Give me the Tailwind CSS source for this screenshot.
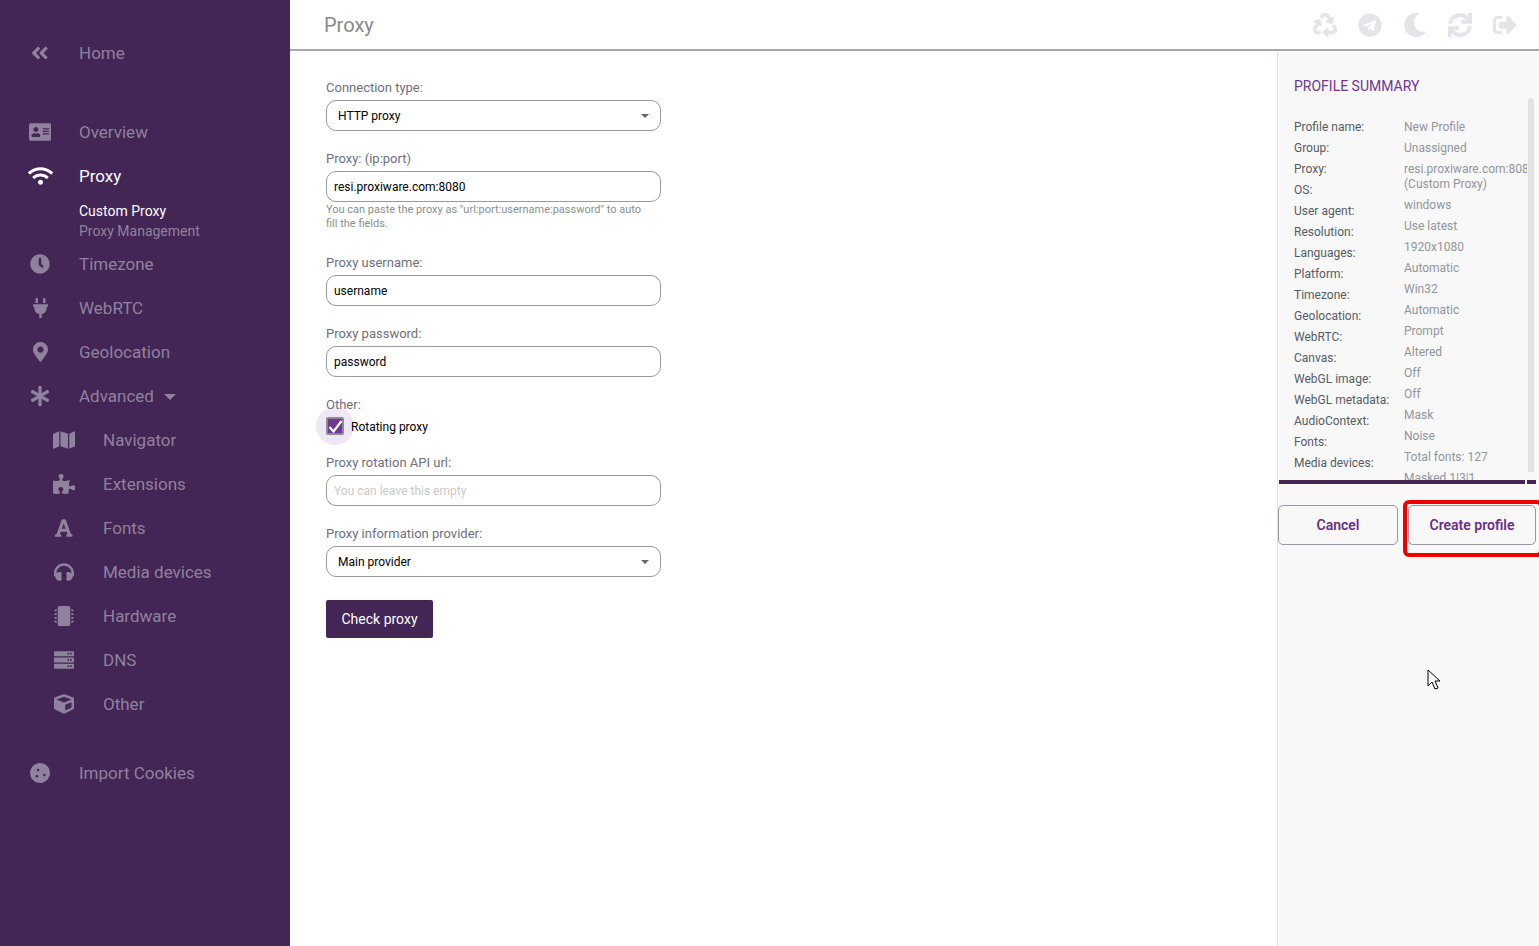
<!DOCTYPE html>
<html lang="en">
<head>
    <meta charset="UTF-8">
    <title>Proxy</title>
    <script src="https://cdn.jsdelivr.net/npm/@tailwindcss/browser@4"></script>
</head>
<body class="bg-white font-['Roboto',sans-serif] overflow-hidden">
<div class="flex h-[946px] w-[1539px] relative overflow-hidden">

    <!-- Sidebar -->
    <aside class="w-[290px] shrink-0 bg-[#432556] text-[#8f829d] text-[17px] pt-[31px]">
        <div class="flex items-center h-[44px] pl-[25px] gap-[24px]">
            <span class="w-[30px] flex justify-center"><svg class="h-[20px] fill-current" viewBox="0 0 448 512"><path d="M223.7 239l136-136c9.4-9.4 24.6-9.4 33.9 0l22.6 22.6c9.4 9.4 9.4 24.6 0 33.9L319.9 256l96.4 96.4c9.4 9.4 9.4 24.6 0 33.9L393.7 409c-9.4 9.4-24.6 9.4-33.9 0l-136-136c-9.5-9.4-9.5-24.6-.1-34zm-192 34l136 136c9.4 9.4 24.6 9.4 33.9 0l22.6-22.6c9.4-9.4 9.4-24.6 0-33.9L127.9 256l96.4-96.4c9.4-9.4 9.4-24.6 0-33.9L201.7 103c-9.4-9.4-24.6-9.4-33.9 0l-136 136c-9.5 9.4-9.5 24.6-.1 34z"/></svg></span>
            <span class="pt-[2px]">Home</span>
        </div>

        <div class="flex items-center h-[44px] pl-[25px] gap-[24px] mt-[35px]">
            <span class="w-[30px] flex justify-center"><svg class="h-[20px] fill-current" viewBox="0 0 576 512"><path d="M528 32H48C21.5 32 0 53.5 0 80v352c0 26.5 21.5 48 48 48h480c26.5 0 48-21.5 48-48V80c0-26.5-21.5-48-48-48zm-352 96c35.3 0 64 28.7 64 64s-28.7 64-64 64-64-28.7-64-64 28.7-64 64-64zm112 236.8c0 10.6-10 19.2-22.4 19.2H86.4C74 384 64 375.4 64 364.8v-19.2c0-31.8 30.1-57.6 67.2-57.6h5c12.3 5.1 25.7 8 39.8 8s27.6-2.9 39.8-8h5c37.1 0 67.2 25.8 67.2 57.6v19.2zM512 312c0 4.4-3.6 8-8 8H360c-4.4 0-8-3.6-8-8v-16c0-4.4 3.6-8 8-8h144c4.4 0 8 3.6 8 8v16zm0-64c0 4.4-3.6 8-8 8H360c-4.4 0-8-3.6-8-8v-16c0-4.4 3.6-8 8-8h144c4.4 0 8 3.6 8 8v16zm0-64c0 4.4-3.6 8-8 8H360c-4.4 0-8-3.6-8-8v-16c0-4.4 3.6-8 8-8h144c4.4 0 8 3.6 8 8v16z"/></svg></span>
            <span class="pt-[2px]">Overview</span>
        </div>
        <div class="flex items-center h-[44px] pl-[25px] gap-[24px] text-white">
            <span class="w-[30px] flex justify-center"><svg class="h-[20px] fill-current" viewBox="0 0 640 512"><path d="M634.91 154.88C457.74-8.99 182.19-8.93 5.09 154.88c-6.66 6.16-6.79 16.59-.35 22.98l34.24 33.97c6.14 6.1 16.02 6.23 22.4.38 145.92-133.68 371.3-133.71 517.25 0 6.38 5.85 16.26 5.71 22.4-.38l34.24-33.97c6.43-6.39 6.3-16.82-.36-22.98zM320 352c-35.35 0-64 28.65-64 64s28.65 64 64 64 64-28.65 64-64-28.65-64-64-64zm202.67-83.59c-115.26-101.93-290.21-101.82-405.34 0-6.9 6.1-7.12 16.69-.57 23.15l34.44 33.99c6 5.92 15.66 6.32 22.05.8 83.95-72.57 209.74-72.41 293.49 0 6.39 5.52 16.05 5.13 22.05-.8l34.44-33.99c6.56-6.46 6.33-17.06-.56-23.15z"/></svg></span>
            <span class="pt-[2px]">Proxy</span>
        </div>
        <div class="pl-[79px] pt-[3px] pb-[1px] text-[14px] leading-[20px]">
            <div class="text-white">Custom Proxy</div>
            <div>Proxy Management</div>
        </div>
        <div class="flex items-center h-[44px] pl-[25px] gap-[24px]">
            <span class="w-[30px] flex justify-center"><svg class="h-[20px] fill-current" viewBox="0 0 512 512"><path d="M256,8C119,8,8,119,8,256S119,504,256,504,504,393,504,256,393,8,256,8Zm92.49,313h0l-20,25a16,16,0,0,1-22.49,2.5h0l-67-49.72a40,40,0,0,1-15-31.23V112a16,16,0,0,1,16-16h32a16,16,0,0,1,16,16V256l58,42.5A16,16,0,0,1,348.49,321Z"/></svg></span>
            <span class="pt-[2px]">Timezone</span>
        </div>
        <div class="flex items-center h-[44px] pl-[25px] gap-[24px]">
            <span class="w-[30px] flex justify-center"><svg class="h-[20px] fill-current" viewBox="0 0 384 512"><path d="M320,32a32,32,0,0,0-64,0v96h64Zm48,128H16A16,16,0,0,0,0,176v32a16,16,0,0,0,16,16H32v32A160.07,160.07,0,0,0,160,412.8V512h64V412.8A160.07,160.07,0,0,0,352,256V224h16a16,16,0,0,0,16-16V176A16,16,0,0,0,368,160ZM128,32a32,32,0,0,0-64,0v96h64Z"/></svg></span>
            <span class="pt-[2px]">WebRTC</span>
        </div>
        <div class="flex items-center h-[44px] pl-[25px] gap-[24px]">
            <span class="w-[30px] flex justify-center"><svg class="h-[20px] fill-current" viewBox="0 0 384 512"><path d="M172.268 501.67C26.97 291.031 0 269.413 0 192 0 85.961 85.961 0 192 0s192 85.961 192 192c0 77.413-26.97 99.031-172.268 309.67-9.535 13.774-29.93 13.773-39.464 0zM192 272c44.183 0 80-35.817 80-80s-35.817-80-80-80-80 35.817-80 80 35.817 80 80 80z"/></svg></span>
            <span class="pt-[2px]">Geolocation</span>
        </div>
        <div class="flex items-center h-[44px] pl-[25px] gap-[24px]">
            <span class="w-[30px] flex justify-center"><svg class="h-[20px] fill-current" viewBox="0 0 512 512"><path d="M478.21 334.093L336 256l142.21-78.093c11.795-6.477 15.961-21.384 9.232-33.037l-19.48-33.741c-6.728-11.653-21.72-15.499-33.227-8.523L296 186.718l3.475-162.204C299.763 11.061 288.937 0 275.48 0h-38.96c-13.456 0-24.283 11.061-23.994 24.514L216 186.718 77.265 102.607c-11.506-6.976-26.499-3.13-33.227 8.523l-19.48 33.741c-6.728 11.653-2.562 26.56 9.233 33.037L176 256 33.79 334.093c-11.795 6.477-15.961 21.384-9.232 33.037l19.48 33.741c6.728 11.653 21.721 15.499 33.227 8.523L216 325.282l-3.475 162.204C212.237 500.939 223.064 512 236.52 512h38.961c13.456 0 24.283-11.061 23.995-24.514L296 325.282l138.735 84.111c11.506 6.976 26.499 3.13 33.227-8.523l19.48-33.741c6.728-11.653 2.563-26.559-9.232-33.036z"/></svg></span>
            <span class="pt-[2px]">Advanced</span>
            <svg class="w-[12px] h-[6px] fill-current -ml-[14px] mt-[2px]" viewBox="0 0 12 6"><path d="M0 0h12L6 6z"/></svg>
        </div>

        <div class="flex items-center h-[44px] pl-[49px] gap-[24px]">
            <span class="w-[30px] flex justify-center"><svg class="h-[20px] fill-current" viewBox="0 0 576 512"><path d="M0 117.66v346.32c0 11.32 11.43 19.06 21.94 14.86L160 416V32L20.12 87.95A32.006 32.006 0 0 0 0 117.66zM192 416l192 64V96L192 32v384zM554.06 33.16L416 96v384l139.88-55.95A31.996 31.996 0 0 0 576 394.34V48.02c0-11.32-11.43-19.06-21.94-14.86z"/></svg></span>
            <span class="pt-[2px]">Navigator</span>
        </div>
        <div class="flex items-center h-[44px] pl-[49px] gap-[24px]">
            <span class="w-[30px] flex justify-center"><svg class="h-[20px] fill-current" viewBox="0 0 576 512"><path d="M519.442 288.651c-41.519 0-59.5 31.593-82.058 31.593C377.409 320.244 432 144 432 144s-196.288 80-196.288-3.297c0-35.827 36.288-46.25 36.288-85.985C272 19.216 243.885 0 210.539 0c-34.654 0-66.366 18.891-66.366 56.346 0 41.364 31.711 59.277 31.711 81.75C175.885 207.719 0 166.758 0 166.758v333.237s178.635 41.047 178.635-28.662c0-22.473-40-40.107-40-81.471 0-37.456 29.25-56.346 63.577-56.346 33.673 0 61.788 19.216 61.788 54.717 0 39.735-36.288 50.158-36.288 85.985 0 60.803 129.675 25.73 181.23 25.73 0 0-34.725-120.101 25.827-120.101 35.962 0 46.423 36.152 86.308 36.152C556.712 416 576 387.99 576 354.443c0-34.199-18.962-65.792-56.558-65.792z"/></svg></span>
            <span class="pt-[2px]">Extensions</span>
        </div>
        <div class="flex items-center h-[44px] pl-[49px] gap-[24px]">
            <span class="w-[30px] flex justify-center"><svg class="h-[20px] fill-current" viewBox="0 0 448 512"><path d="M432 416h-23.41L277.88 53.69A32 32 0 0 0 247.58 32h-47.16a32 32 0 0 0-30.3 21.69L39.41 416H16a16 16 0 0 0-16 16v32a16 16 0 0 0 16 16h128a16 16 0 0 0 16-16v-32a16 16 0 0 0-16-16h-19.6l23.3-64h152.6l23.3 64H304a16 16 0 0 0-16 16v32a16 16 0 0 0 16 16h128a16 16 0 0 0 16-16v-32a16 16 0 0 0-16-16zM176.85 272L224 142.51 271.15 272z"/></svg></span>
            <span class="pt-[2px]">Fonts</span>
        </div>
        <div class="flex items-center h-[44px] pl-[49px] gap-[24px]">
            <span class="w-[30px] flex justify-center"><svg class="h-[20px] fill-current" viewBox="0 0 512 512"><path d="M256 32C114.52 32 0 146.496 0 288v48a32 32 0 0 0 17.689 28.622l14.383 7.191C34.083 431.903 83.421 480 144 480h24c13.255 0 24-10.745 24-24V280c0-13.255-10.745-24-24-24h-24c-31.342 0-59.671 12.879-80 33.627V288c0-105.869 86.131-192 192-192s192 86.131 192 192v1.627C427.671 268.879 399.342 256 368 256h-24c-13.255 0-24 10.745-24 24v176c0 13.255 10.745 24 24 24h24c60.579 0 109.917-48.098 111.928-108.187l14.382-7.191A32 32 0 0 0 512 336v-48c0-141.504-114.52-256-256-256z"/></svg></span>
            <span class="pt-[2px]">Media devices</span>
        </div>
        <div class="flex items-center h-[44px] pl-[49px] gap-[24px]">
            <span class="w-[30px] flex justify-center"><svg class="h-[20px] fill-current" viewBox="0 0 512 512"><path d="M416 48v416c0 26.51-21.49 48-48 48H144c-26.51 0-48-21.49-48-48V48c0-26.51 21.49-48 48-48h224c26.51 0 48 21.49 48 48zm96 58v12a6 6 0 0 1-6 6h-18v6a6 6 0 0 1-6 6h-42V88h42a6 6 0 0 1 6 6v6h18a6 6 0 0 1 6 6zm0 96v12a6 6 0 0 1-6 6h-18v6a6 6 0 0 1-6 6h-42v-48h42a6 6 0 0 1 6 6v6h18a6 6 0 0 1 6 6zm0 96v12a6 6 0 0 1-6 6h-18v6a6 6 0 0 1-6 6h-42v-48h42a6 6 0 0 1 6 6v6h18a6 6 0 0 1 6 6zm0 96v12a6 6 0 0 1-6 6h-18v6a6 6 0 0 1-6 6h-42v-48h42a6 6 0 0 1 6 6v6h18a6 6 0 0 1 6 6zM30 376h42v48H30a6 6 0 0 1-6-6v-6H6a6 6 0 0 1-6-6v-12a6 6 0 0 1 6-6h18v-6a6 6 0 0 1 6-6zm0-96h42v48H30a6 6 0 0 1-6-6v-6H6a6 6 0 0 1-6-6v-12a6 6 0 0 1 6-6h18v-6a6 6 0 0 1 6-6zm0-96h42v48H30a6 6 0 0 1-6-6v-6H6a6 6 0 0 1-6-6v-12a6 6 0 0 1 6-6h18v-6a6 6 0 0 1 6-6zm0-96h42v48H30a6 6 0 0 1-6-6v-6H6a6 6 0 0 1-6-6v-12a6 6 0 0 1 6-6h18v-6a6 6 0 0 1 6-6z"/></svg></span>
            <span class="pt-[2px]">Hardware</span>
        </div>
        <div class="flex items-center h-[44px] pl-[49px] gap-[24px]">
            <span class="w-[30px] flex justify-center"><svg class="h-[20px] fill-current" viewBox="0 0 512 512"><path d="M480 160H32c-17.673 0-32-14.327-32-32V64c0-17.673 14.327-32 32-32h448c17.673 0 32 14.327 32 32v64c0 17.673-14.327 32-32 32zm-48-88c-13.255 0-24 10.745-24 24s10.745 24 24 24 24-10.745 24-24-10.745-24-24-24zm-64 0c-13.255 0-24 10.745-24 24s10.745 24 24 24 24-10.745 24-24-10.745-24-24-24zm112 248H32c-17.673 0-32-14.327-32-32v-64c0-17.673 14.327-32 32-32h448c17.673 0 32 14.327 32 32v64c0 17.673-14.327 32-32 32zm-48-88c-13.255 0-24 10.745-24 24s10.745 24 24 24 24-10.745 24-24-10.745-24-24-24zm-64 0c-13.255 0-24 10.745-24 24s10.745 24 24 24 24-10.745 24-24-10.745-24-24-24zm112 248H32c-17.673 0-32-14.327-32-32v-64c0-17.673 14.327-32 32-32h448c17.673 0 32 14.327 32 32v64c0 17.673-14.327 32-32 32zm-48-88c-13.255 0-24 10.745-24 24s10.745 24 24 24 24-10.745 24-24-10.745-24-24-24zm-64 0c-13.255 0-24 10.745-24 24s10.745 24 24 24 24-10.745 24-24-10.745-24-24-24z"/></svg></span>
            <span class="pt-[2px]">DNS</span>
        </div>
        <div class="flex items-center h-[44px] pl-[49px] gap-[24px]">
            <span class="w-[30px] flex justify-center"><svg class="h-[20px] fill-current" viewBox="0 0 512 512"><path d="M239.1 6.3l-208 78c-18.7 7-31.1 25-31.1 45v225.1c0 18.2 10.3 34.8 26.5 42.9l208 104c13.5 6.8 29.4 6.8 42.9 0l208-104c16.3-8.1 26.5-24.8 26.5-42.9V129.3c0-20-12.4-37.9-31.1-44.9l-208-78C262 2.2 250 2.2 239.1 6.3zM256 68.4l192 72v1.1l-192 78-192-78v-1.1l192-72zm32 356V275.5l160-65v133.9l-160 80z"/></svg></span>
            <span class="pt-[2px]">Other</span>
        </div>

        <div class="flex items-center h-[44px] pl-[25px] gap-[24px] mt-[25px]">
            <span class="w-[30px] flex justify-center"><svg class="h-[20px] fill-current" viewBox="0 0 512 512"><path d="M510.37 254.79l-12.08-76.26a132.493 132.493 0 0 0-37.16-72.95l-54.76-54.75c-19.73-19.72-45.18-32.7-72.71-37.05l-76.7-12.15c-27.51-4.36-55.69.11-80.52 12.76L107.32 49.6a132.25 132.25 0 0 0-57.79 57.8l-35.1 68.88a132.602 132.602 0 0 0-12.82 80.94l12.08 76.27a132.493 132.493 0 0 0 37.16 72.95l54.76 54.75a132.087 132.087 0 0 0 72.71 37.05l76.7 12.14c27.51 4.36 55.69-.11 80.52-12.75l69.12-35.21a132.302 132.302 0 0 0 57.79-57.8l35.1-68.87c12.71-24.96 17.2-53.3 12.82-80.96zM176 368c-17.67 0-32-14.33-32-32s14.33-32 32-32 32 14.33 32 32-14.33 32-32 32zm32-160c-17.67 0-32-14.33-32-32s14.33-32 32-32 32 14.33 32 32-14.33 32-32 32zm160 128c-17.67 0-32-14.33-32-32s14.33-32 32-32 32 14.33 32 32-14.33 32-32 32z"/></svg></span>
            <span class="pt-[2px]">Import Cookies</span>
        </div>
    </aside>

    <div class="flex-1 flex flex-col min-w-0">
        <!-- Header -->
        <header class="h-[51px] shrink-0 flex items-center justify-between border-b-2 border-[#aaa6b1] pl-[34px] pr-[22px]">
            <h1 class="text-[20px] text-[#8a8a8a]">Proxy</h1>
            <div class="flex items-center gap-[21px] text-[#e3e5e8]">
                <svg class="w-[24px] h-[24px] fill-current stroke-current stroke-[14px]" viewBox="0 0 512 512"><path d="M184.561 261.903c3.232 13.997-12.123 24.635-24.068 17.168l-40.736-25.455-50.867 81.402C55.606 356.273 70.96 384 96.012 384H148c6.627 0 12 5.373 12 12v40c0 6.627-5.373 12-12 12H96.115c-75.334 0-121.302-83.048-81.408-146.88l50.822-81.388-40.725-25.448c-12.081-7.547-8.966-25.961 4.879-29.158l110.237-25.45c8.611-1.988 17.201 3.381 19.189 11.99l25.452 110.237zm98.561-182.915l41.289 66.076-40.74 25.457c-12.051 7.528-9 25.953 4.879 29.158l110.237 25.45c8.672 1.999 17.215-3.438 19.189-11.99l25.45-110.237c3.197-13.844-11.99-24.719-24.068-17.168l-40.687 25.424-41.263-66.082c-37.521-60.033-125.209-60.171-162.816 0l-17.963 28.766c-3.51 5.62-1.8 13.021 3.82 16.533l33.919 21.195c5.62 3.512 13.024 1.803 16.536-3.817l17.961-28.743c12.712-20.341 41.973-19.676 54.257-.022zM497.288 301.12l-27.515-44.065c-3.511-5.623-10.916-7.334-16.538-3.821l-33.861 21.159c-5.62 3.512-7.33 10.915-3.818 16.536l27.564 44.112c13.257 21.211-2.057 48.96-27.136 48.96H320V336.02c0-14.213-17.242-21.383-27.313-11.313l-80 79.981c-6.249 6.248-6.249 16.379 0 22.627l80 79.989C302.689 517.308 320 510.3 320 495.989V448h95.88c75.274 0 121.335-82.997 81.408-146.88z"/></svg>
                <svg class="w-[24px] h-[24px] fill-current" viewBox="0 0 496 512"><path d="M248 8C111 8 0 119 0 256s111 248 248 248 248-111 248-248S385 8 248 8zm121.8 169.9l-40.7 191.8c-3 13.6-11.1 16.9-22.4 10.5l-62-45.7-29.9 28.8c-3.3 3.3-6.1 6.1-12.5 6.1l4.4-63.1 114.9-103.8c5-4.4-1.1-6.9-7.7-2.5l-142 89.4-61.2-19.1c-13.3-4.2-13.6-13.3 2.8-19.7l239.1-92.2c11.1-4 20.8 2.7 17.2 19.5z"/></svg>
                <svg class="w-[24px] h-[24px] fill-current" viewBox="0 0 512 512"><path d="M283.211 512c78.962 0 151.079-35.925 198.857-94.792 7.068-8.708-.639-21.43-11.562-19.35-124.203 23.654-238.262-71.576-238.262-196.954 0-72.222 38.662-138.635 101.498-174.394 9.686-5.512 7.25-20.197-3.756-22.23A258.156 258.156 0 0 0 283.211 0c-141.309 0-256 114.511-256 256 0 141.309 114.511 256 256 256z"/></svg>
                <svg class="w-[24px] h-[24px] fill-current stroke-current stroke-[14px]" viewBox="0 0 512 512"><path d="M440.65 12.57l4 82.77A247.16 247.16 0 0 0 255.83 8C134.73 8 33.91 94.92 12.29 209.82A12 12 0 0 0 24.09 224h49.05a12 12 0 0 0 11.67-9.26 175.91 175.91 0 0 1 317-56.94l-101.46-4.86a12 12 0 0 0-12.57 12v47.41a12 12 0 0 0 12 12H500a12 12 0 0 0 12-12V12a12 12 0 0 0-12-12h-47.37a12 12 0 0 0-11.98 12.57zM255.83 432a175.61 175.61 0 0 1-146-77.8l101.8 4.87a12 12 0 0 0 12.57-12v-47.4a12 12 0 0 0-12-12H12a12 12 0 0 0-12 12V500a12 12 0 0 0 12 12h47.35a12 12 0 0 0 12-12.6l-4.15-82.57A247.17 247.17 0 0 0 255.83 504c121.11 0 221.93-86.92 243.55-201.82a12 12 0 0 0-11.8-14.18h-49.05a12 12 0 0 0-11.67 9.26A175.86 175.86 0 0 1 255.83 432z"/></svg>
                <svg class="w-[24px] h-[24px] fill-current" viewBox="0 0 512 512"><path d="M497 273L329 441c-15 15-41 4.5-41-17v-96H152c-13.3 0-24-10.7-24-24v-96c0-13.3 10.7-24 24-24h136V88c0-21.4 25.9-32 41-17l168 168c9.3 9.4 9.3 24.6 0 34zM192 436v-40c0-6.6-5.4-12-12-12H96c-17.7 0-32-14.3-32-32V160c0-17.7 14.3-32 32-32h84c6.6 0 12-5.4 12-12V76c0-6.6-5.4-12-12-12H96c-53 0-96 43-96 96v192c0 53 43 96 96 96h84c6.6 0 12-5.4 12-12z"/></svg>
            </div>
        </header>

        <div class="flex-1 flex min-h-0">
            <!-- Form -->
            <main class="flex-1 pl-[36px] pt-[28px]">
                <div class="w-[335px]">
                    <label class="block h-[16px] leading-[18px] text-[13px] text-[#6f6f7d] mb-[5px]">Connection type:</label>
                    <div class="flex items-center justify-between h-[31px] border border-[#9a9a9a] rounded-[10px] pl-[11px] pr-[11px] text-[12px] text-black mb-[19px]">
                        <span>HTTP proxy</span>
                        <svg class="w-[8px] h-[4px] fill-[#666]" viewBox="0 0 8 4"><path d="M0 0h8L4 4z"/></svg>
                    </div>

                    <label class="block h-[16px] leading-[18px] text-[13px] text-[#6f6f7d] mb-[5px]">Proxy: (ip:port)</label>
                    <input class="block w-full h-[31px] border border-[#9a9a9a] rounded-[10px] px-[7px] text-[12px] text-black" value="resi.proxiware.com:8080">
                    <p class="text-[11px] leading-[14px] pt-[1px] pr-[10px] text-[#8a8f8f] mb-[23px]">You can paste the proxy as "url:port:username:password" to auto fill the fields.</p>

                    <label class="block h-[16px] leading-[18px] text-[13px] text-[#6f6f7d] mb-[5px]">Proxy username:</label>
                    <input class="block w-full h-[31px] border border-[#9a9a9a] rounded-[10px] px-[7px] text-[12px] text-black mb-[19px]" value="username">

                    <label class="block h-[16px] leading-[18px] text-[13px] text-[#6f6f7d] mb-[5px]">Proxy password:</label>
                    <input class="block w-full h-[31px] border border-[#9a9a9a] rounded-[10px] px-[7px] text-[12px] text-black mb-[20px]" value="password">

                    <label class="relative z-10 block h-[16px] leading-[16px] text-[13px] text-[#6f6f7d]">Other:</label>
                    <div class="relative flex items-center h-[26px] mb-[15px] text-[12px] text-black">
                        <span class="absolute left-[-10px] top-[-6px] w-[38px] h-[38px] rounded-full bg-[#efe7f3]"></span>
                        <span class="relative flex items-center justify-center w-[18px] h-[18px] bg-[#6f3a8f] border-2 border-[#8a8a94] rounded-[2px]">
                            <svg class="w-[15px] h-[15px] shrink-0" viewBox="0 0 15 15" fill="none" stroke="white" stroke-width="2.2"><path d="M1.5 8l4 4.5L13.5 2"/></svg>
                        </span>
                        <span class="relative ml-[7px] pt-[2px]">Rotating proxy</span>
                    </div>

                    <label class="block h-[16px] leading-[18px] text-[13px] text-[#6f6f7d] mb-[5px]">Proxy rotation API url:</label>
                    <input class="block w-full h-[31px] border border-[#9a9a9a] rounded-[10px] px-[7px] text-[12px] placeholder:text-[#c9c9c9] mb-[19px]" placeholder="You can leave this empty">

                    <label class="block h-[16px] leading-[18px] text-[13px] text-[#6f6f7d] mb-[5px]">Proxy information provider:</label>
                    <div class="flex items-center justify-between h-[31px] border border-[#9a9a9a] rounded-[10px] pl-[11px] pr-[11px] text-[12px] text-black mb-[23px]">
                        <span>Main provider</span>
                        <svg class="w-[8px] h-[4px] fill-[#666]" viewBox="0 0 8 4"><path d="M0 0h8L4 4z"/></svg>
                    </div>

                    <button class="w-[107px] h-[38px] bg-[#432556] text-white text-[14px] rounded-[2px]">Check proxy</button>
                </div>
            </main>

            <!-- Profile summary -->
            <section class="w-[262px] shrink-0 mt-[1px] bg-[#f8f8f8] border-l border-[#e2e2e2]">
                <div class="relative h-[428px] overflow-hidden">
                    <h2 class="pt-[26px] pl-[16px] text-[14px] leading-[16px] text-[#6f3596]">PROFILE SUMMARY</h2>
                    <div class="flex pl-[16px] pt-[23px] text-[12px] leading-[21px]">
                        <div class="w-[110px] shrink-0 text-[#565c66] whitespace-nowrap">
                            <div>Profile name:</div>
                            <div>Group:</div>
                            <div>Proxy:</div>
                            <div>OS:</div>
                            <div>User agent:</div>
                            <div>Resolution:</div>
                            <div>Languages:</div>
                            <div>Platform:</div>
                            <div>Timezone:</div>
                            <div>Geolocation:</div>
                            <div>WebRTC:</div>
                            <div>Canvas:</div>
                            <div>WebGL image:</div>
                            <div>WebGL metadata:</div>
                            <div>AudioContext:</div>
                            <div>Fonts:</div>
                            <div>Media devices:</div>
                        </div>
                        <div class="w-[123px] overflow-hidden shrink-0 text-[#92969b] whitespace-nowrap">
                            <div>New Profile</div>
                            <div>Unassigned</div>
                            <div class="leading-[15px] py-[3px]">resi.proxiware.com:8080<br>(Custom Proxy)</div>
                            <div>windows</div>
                            <div>Use latest</div>
                            <div>1920x1080</div>
                            <div>Automatic</div>
                            <div>Win32</div>
                            <div>Automatic</div>
                            <div>Prompt</div>
                            <div>Altered</div>
                            <div>Off</div>
                            <div>Off</div>
                            <div>Mask</div>
                            <div>Noise</div>
                            <div>Total fonts: 127</div>
                            <div>Masked 1|3|1</div>
                        </div>
                    </div>
                    <span class="absolute left-[250px] top-[46px] bottom-[8px] w-[6px] bg-[#e3e3e3] rounded-t-[3px]"></span>
                </div>
                <div class="flex ml-[1px] mr-[3px] gap-[1px] h-[4px]">
                    <span class="w-[246px] bg-[#432556]"></span>
                    <span class="w-[9px] ml-[1px] bg-[#432556]"></span>
                </div>
                <div class="flex gap-[10px] mt-[21px]">
                    <button class="w-[120px] h-[40px] border border-[#9b97a8] rounded-[5px] text-[14px] font-semibold text-[#6b2d8b]">Cancel</button>
                    <div class="relative">
                        <button class="w-[128px] h-[40px] border border-[#9b97a8] rounded-[5px] text-[14px] font-semibold text-[#6b2d8b]">Create profile</button>
                        <span class="absolute left-[-5px] top-[-5px] w-[140px] h-[57px] border-[4px] border-[#f00000] rounded-[6px]"></span>
                    </div>
                </div>
            </section>
        </div>
    </div>

    <!-- Mouse cursor -->
    <svg class="absolute left-[1427px] top-[669px] w-[13px] h-[22px]" viewBox="0 0 13 22"><path d="M1 1v16l4-4 3 7 3-1-3-7h5z" fill="white" stroke="black" stroke-width="1"/></svg>
</div>
</body>
</html>
